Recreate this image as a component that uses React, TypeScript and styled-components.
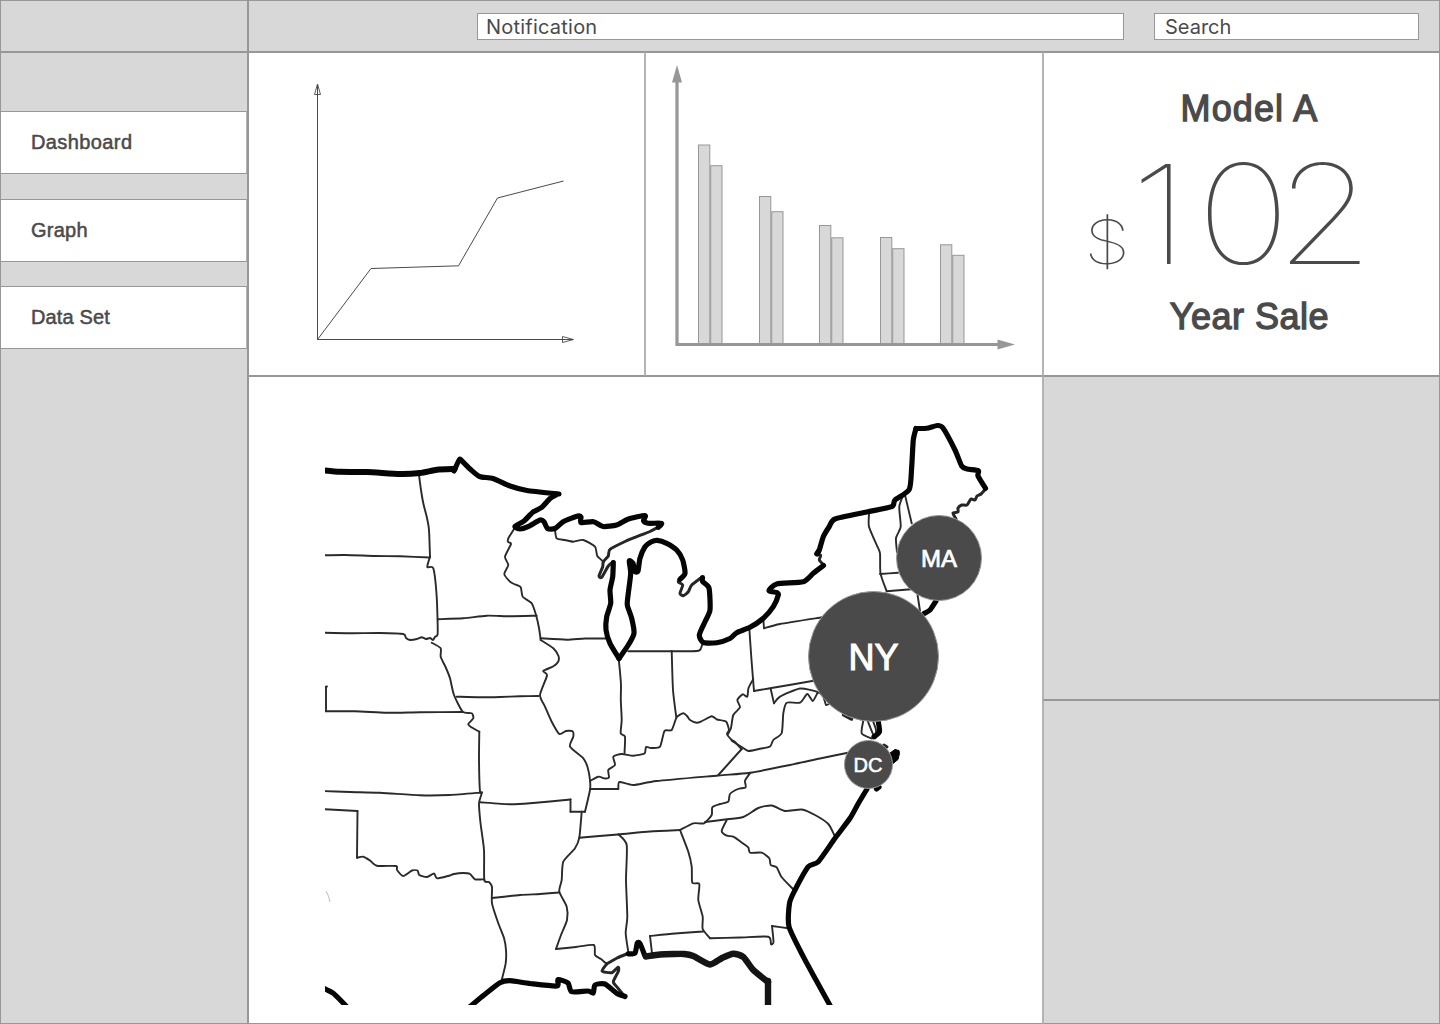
import React from "react";
import styled, { createGlobalStyle } from "styled-components";

const line = "#979797";
const softLine = "#b4b4b4";
const panelGrey = "#d8d8d8";
const ink = "#4a4a4a";
const helvetica = '"Liberation Sans", Arial, sans-serif';

const GlobalStyle = createGlobalStyle`
  *, *::before, *::after { box-sizing: border-box; }
  body { margin: 0; background: #fff; color: ${ink}; font-family: ${helvetica}; }
`;

const Page = styled.div`
  display: grid;
  grid-template-columns: 248px 1fr;
  grid-template-rows: 52px 972px;
  width: 1440px;
  height: 1024px;
  overflow: hidden;
`;

const Brand = styled.div`
  background: ${panelGrey};
  border: 1px solid ${line};
`;

const Header = styled.header`
  display: flex;
  justify-content: flex-end;
  gap: 30px;
  padding: 12px 20px 0 0;
  background: ${panelGrey};
  border: 1px solid ${line};
`;

const Field = styled.div<{ $width: number; $inset: number; $tracking: number }>`
  width: ${(p) => p.$width}px;
  height: 27px;
  padding-left: ${(p) => p.$inset}px;
  background: #fff;
  border: 1px solid ${line};
  font: 400 20px/26px Inter, sans-serif;
  letter-spacing: ${(p) => p.$tracking}px;
`;

const Sidebar = styled.nav`
  display: flex;
  flex-direction: column;
  padding-top: 58px;
  background: ${panelGrey};
  border: 1px solid ${line};
`;

const NavItem = styled.a<{ $gap: number; $tracking: number }>`
  height: 63px;
  margin-bottom: ${(p) => p.$gap}px;
  padding-left: 30px;
  background: #fff;
  border: solid ${line};
  border-width: 1px 1px 1px 0;
  border-right-color: ${softLine};
  font-size: 20px;
  line-height: 61px;
  letter-spacing: ${(p) => p.$tracking}px;
  -webkit-text-stroke: 0.5px ${ink};
`;

const Board = styled.main`
  display: grid;
  grid-template-columns: 397px 398px 397px;
  grid-template-rows: 324px 324px 324px;
`;

const Panel = styled.section<{ $grey?: boolean }>`
  background: ${(p) => (p.$grey ? panelGrey : "#fff")};
  border: 1px solid ${line};
  border-left-color: ${softLine};
  border-right-color: ${softLine};
  overflow: hidden;
  &:first-child { border-left-color: ${line}; }
  &:nth-child(3), &:nth-child(n + 5) { border-right-color: ${line}; }
  svg { display: block; }
`;

const MapPanel = styled(Panel)`
  grid-column: 1 / 3;
  grid-row: 2 / 4;
  border-left-color: ${line};
  padding: 35px 0 0 76px;
`;

const MapArea = styled.div`
  position: relative;
  width: 680px;
  height: 593px;
`;

const Pin = styled.div<{ $x: number; $y: number; $r: number; $size: number }>`
  position: absolute;
  left: ${(p) => p.$x - p.$r - 325}px;
  top: ${(p) => p.$y - p.$r - 412}px;
  width: ${(p) => p.$r * 2}px;
  height: ${(p) => p.$r * 2}px;
  display: flex;
  align-items: center;
  justify-content: center;
  border: 1px solid ${line};
  border-radius: 50%;
  background: ${ink};
  color: #fff;
  font-size: ${(p) => p.$size}px;
  line-height: 1;
  padding-top: ${(p) => p.$size * 0.09}px;
  -webkit-text-stroke: ${(p) => p.$size * 0.03}px #fff;
`;

const Metric = styled(Panel)`
  display: flex;
  flex-direction: column;
  align-items: center;
  padding: 36px 0 0 16px;
`;

const MetricLabel = styled.h2<{ $tracking: number }>`
  margin: 0;
  font-size: 36px;
  font-weight: 400;
  line-height: 40px;
  letter-spacing: ${(p) => p.$tracking}px;
  -webkit-text-stroke: 1.3px ${ink};
`;

const Amount = styled.div`
  display: flex;
  align-items: baseline;
  height: 168px;
  margin-left: -47px;
  font-family: Inter, sans-serif;
  font-weight: 100;
  line-height: 170px;
`;

const Currency = styled.span`
  font-size: 61px;
  transform: scaleX(1.24);
  transform-origin: right;
`;

const Digits = styled.span`
  font-size: 138px;
  margin-left: 30px;
  letter-spacing: -13px;
  transform: scaleX(1.15);
  transform-origin: right;
`;

const LeadDigit = styled.span`
  letter-spacing: 7px;
`;

const barGroups = [
  { x: 698.5, tops: [145, 165.7] },
  { x: 759.5, tops: [196.5, 211.7] },
  { x: 819.5, tops: [225.5, 237.8] },
  { x: 880.5, tops: [237.5, 248.7] },
  { x: 940.5, tops: [244.8, 255.3] },
];

const northBorder = [
  "320,470 340,471.8 367,472 400,474 420,473 437,469.8 454.5,469",
];

const coast = [
  "454,471 459.5,459.5 463,462 470,469 479.5,476.5 493,478.5 510,486 527,490.5 559,494",
  "556,495 550,498.5 541.5,507.5 533,512 524,521 515,526.5 520,529 528,526.7 540,520 544,521.7 547.5,528.5 555,528.5 563.5,521.5 578,516 581,517 581,522.5 593.5,521.7 603,526.5 616.7,525 628.5,519 645,515.5 643.5,520.7 648.3,523.3 661.5,523.3 658.3,527.3",
  "613.3,562.7 612.7,576.7 610,590 610.7,603.3 606.7,616.7 606,630 610,643.3 619,658.5",
  "619,658.5 628.3,645 634,633.3 631.7,618.3 627.3,605 628.3,593.3 630.7,573.3 629.3,561 633,563.3 635,571.5 638,571 640,558.3 645,546.7 651,542 657.3,540.3 666.7,543.3 676.7,550 682.7,560 685,573.3 680,579.3",
  "702.5,577.5 702.7,581.7 709,588 710,610 705,621.7 699.3,635 703.3,642.5 716.7,642.7 730,638.5 736.7,632.7 750,627.3 763.3,618.3 773.3,606.7 778.3,595 777,592.5 769,590.7 776.7,584 803.3,581.7 813.3,573.3 823.5,565.5",
  "817,554 819.3,550 823.3,536.7 829,527 835,519 866.7,512 891.7,506.7 895,500 909.3,489.3 911.7,466.7 913.3,440 916,428.5",
  "916,428.5 926.7,428.3 937.3,425.5 943,428 955,450 961.7,466 967,469 978.3,470.7 978,476 985.5,488.3",
  "867,789 858,804 850,818.3 835,838.3 818.3,861.7 808.3,866.7 795,890 789.5,903.3 789,926.7 803.3,956.7 816,980 832,1009",
  "320,986.5 333.3,993.3 347,1007",
  "466,1010 484,995 500,982.7 510,980.7 530,983.5 556.7,986 558,979.5 568,983 571.7,991.7 588,991 593.3,993 595,985 605,984 616.7,993.3 625,996.5",
  "628.3,953.8 635,953 637.3,943 640,943.5 645,956",
  "936,601 930,610 924,613.5",
  "878,720 879.5,731.7 874,736.7",
  "876.5,789 879,787",
];

const gulf = [
  "646,956.5 660,954.5 673.3,954 684,954 693.3,956 710,964.5 722,958 733.3,953.7 743.3,957 753.3,970 768,982",
  "768,981 768,1012",
];

const shores = [
  "658,527.3 650,531.5 636.7,536.7 626.7,540.7 610,549.3 608.3,556 603.3,561.7 602.7,566.7 599,576 601.7,577.3 608.3,566 613.3,561.7",
  "679,580 678.3,582 682.7,585 680,593.3 683.3,595.7 688.3,591.7 691.7,585 701.7,577.3",
  "824,565.3 819.3,560 820.7,555.3 815.5,554 818,550",
  "986,488.3 981,494 977,496 975,500 971,499 967,505 961.7,505 958,508 958,512 953,513 956,519",
  "606.7,964 617,958 628.3,953.3",
  "606.7,964 602,971 611.7,972.7 618,967.3 618.5,971 613.3,981.7 616.7,986.7 625,996.7",
  "843.3,715 851.7,719.3",
  "884,745 887,747",
];

const borders = [
  "419,475 421,490 423.3,503.3 427,518 429,530 430,556.7",
  "430,556.7 427.3,567 433.3,568.3 436.7,596.7 437.7,633.3 435,636.7 433,640 430,638 426,639 421.7,637.3 417,639 410,640 406,638 403.3,634 380,633 350,633.3 320,632.7",
  "320,555.3 345,555 375,556 400,556.3 430,557.5",
  "437.7,619.3 463.3,618.3 486.7,615.7 510,616.3 536.7,615.7",
  "514,529 508.5,538 508,542 511,544 505,556.7 508.3,565 504.3,574 510,581.7 514,584 520.7,587.3 522.7,596.7 531.7,603.3 536,615 539,628 540.7,640",
  "540.7,640 553.3,648.3 558.5,656 558,662 553,666.5 543.3,671 547,675.5 540,695 545,706.7 551.7,721.7 559.3,734 566,731 572.5,731.3 573.3,736.7 570,746.7 583.3,758.3 587.5,767 590,780 590,790 585,811.7",
  "585,811.7 570.5,811.7",
  "570.5,811.7 570.5,799.5",
  "570.5,799.5 530,803.3 510,804.3 480,802.3",
  "581.7,811.7 579.3,837.7 575,848.3 563.3,861.7 561.7,880 559.3,891.7 566.7,906.7 567,920 561,935 556,949",
  "556,949 576,947 593.8,945 595,955 601,959 606.7,964",
  "579.3,837.7 618,834.5 650,831.5 680,830",
  "618.3,834.3 626.7,845 626,880 627.3,916.7 625.7,933.3 628.3,952",
  "540.7,638.3 566.7,639.7 585,638.5 606,638.5",
  "618.8,660 620,672 621,685 620.8,700 621.7,720 620.7,733.3 625,736.7 624.5,753",
  "590,781 598.3,776.7 605,778.5 609,777.3 608.3,770 615,765 613.3,756.7 621.7,754 633.3,755.7 644.5,753.5 646,747 651,748 660,746.7 664.5,731 671.7,730 676.7,717.3 683.3,713.3 687,716 690,720 696.7,722.7 702,721 711.7,716.3 717,719.5 726,721.5 729,730 727,734 731.7,740 735,742 741.7,749.3",
  "741.7,749 718.3,775",
  "671.7,651 673,690 676.3,717.3",
  "628.3,651.3 660,651.3 697,651 701,648 702.7,643",
  "456.7,696.7 480,697.3 500,697 520,696.3 538.3,696",
  "431.7,642.7 440.7,648.3 440.7,656.7 446,668 450,678.3 454,695 462.7,711.7 471.7,713.3 473.3,718.3 468.3,724 471,727 479.3,731.7",
  "479.3,731.7 479,760 480,791.7 482,792.5 479,803.3 480.5,823 484,850 484.3,880 489,882 492,887 492,903.3 498.3,923.3 504,938 506,950 505.7,963.3 501.7,980",
  "320,711.3 355,711.3 386.7,712.8 420,712.3 462.7,712",
  "325,687 327,686.5",
  "326,687 326,711",
  "320,791 350,792 380,792.7 420,795.3 450,795 481.7,792.5",
  "320,809 357.5,811",
  "357.5,811 357,857.7",
  "357,857.7 363.3,856.7 370,860.5 376.7,865.7 396,866 397,870 403.3,876 412,870.5 417.5,870.5 419.3,875 427,877 434,873.5 437,878.3 448,876 454,874 463,873 470,874 475,879.3 484.3,879.3",
  "492.7,898 520,895 540,894 559.3,892.5",
  "555,530 556.7,538.3 565,540 573.3,541.7 583.3,540 595,546.7 597.3,556 604,562",
  "869,514 869,526.7 876.7,545 880,553.3 880.5,573.3 886.7,591.3",
  "886.7,591.3 911,589.3",
  "880,574 898,572.7",
  "904,493.3 899.3,506.7 900.7,526.7 896,538 897,552",
  "905,495 911.7,523.3",
  "917.3,593 920,611",
  "763.3,619 764,628.3",
  "764,628.3 780,624 822,617.3",
  "749.3,628.3 751.5,660 754,691",
  "754,691 770,688.3 815,680.5",
  "770.7,689 774,703.3",
  "774,703.3 780,696.7 800,688.5 816.7,691.7 823.3,696.7 826,705 830,703",
  "753.3,679 748.5,688 747.3,696.7 742.7,694.3 737.3,700 740,707.3 733.3,715 731,728 728,734",
  "731.7,740.7 741.7,747 748.3,751 759,749 770,746.5 773.3,740 781.7,733 783.3,713.3 786.7,702.7 800,702.7 807.3,694 812.7,701 817.3,693.3",
  "590,789 618.3,789",
  "618.3,789 619.5,782 633.3,785 656.7,781 718.3,775.5 750,772.7 790,765 820,758.5 848,752.7",
  "750,773.3 745,780.7 745.7,787.3 738,789 730,794 728.3,801.7 720,804 712.3,807.3 711.7,815 704,823.3 693.3,823.3 680,830",
  "680,830 688.3,851.7 691.7,866.7 692.3,882.7 699.3,884 698.3,900 702.7,916.7 702.7,929 710,938.3",
  "710,938.3 740,937.5 768.3,936.7 771,944.3 773.5,941.7 772,926",
  "772,926 788.3,928.3",
  "705,822 725,819.5 743.3,817 758.3,808 771.7,805.5 785,811 801.7,809.5 815,815 828.3,824 834.3,835",
  "726.7,820 721.7,831 726.7,835.7 733.3,836.7 741,842 748.3,847.3 750,852.7 761.7,852.7 769.3,858.3 770.7,865 776.7,867.3 781.7,877.3 793.3,889.3",
  "703.3,931.5 675,933.5 650,936",
  "650,936 652,953.3",
  "863.3,720.7 861.7,733.3 871.7,738.5",
  "868,721.7 875,738.3 876,730 873,721",
];

/* Turns a list of "x,y" points into a softly rounded pen stroke. */
const penStroke = (points: string) => {
  const p = points.split(" ").map((pair) => pair.split(",").map(Number));
  const k = 0.11;
  let d = `M${p[0][0]} ${p[0][1]}`;
  for (let i = 0; i < p.length - 1; i++) {
    const before = p[Math.max(i - 1, 0)];
    const from = p[i];
    const to = p[i + 1];
    const after = p[Math.min(i + 2, p.length - 1)];
    d += `C${from[0] + (to[0] - before[0]) * k} ${from[1] + (to[1] - before[1]) * k} `;
    d += `${to[0] - (after[0] - from[0]) * k} ${to[1] - (after[1] - from[1]) * k} ${to[0]} ${to[1]}`;
  }
  return d;
};

const Strokes = ({ lines, width, color }: { lines: string[]; width: number; color: string }) => (
  <g fill="none" stroke={color} strokeWidth={width} strokeLinejoin="round" strokeLinecap="round">
    {lines.map((points) => (
      <path key={points} d={penStroke(points)} />
    ))}
  </g>
);

const StatesMap = () => (
  <svg width="680" height="593" viewBox="325 412 680 593">
    <Strokes lines={borders} width={1.9} color="#2a2a2a" />
    <Strokes lines={shores} width={3} color="#262626" />
    <Strokes lines={coast} width={5.2} color="#050505" />
    <Strokes lines={northBorder} width={6} color="#050505" />
    <Strokes lines={gulf} width={6.4} color="#141414" />
    <path d="M890 753l5-3.5 4 1 .5 3-1.5 6-5 4z" fill="#050505" stroke="#050505" />
    <path d="M326 891q3 5 4 11" fill="none" stroke="#bbb" strokeWidth="1" />
  </svg>
);

const LineChart = () => (
  <svg width="395" height="322" viewBox="249 53 395 322" fill="none" stroke={ink}>
    <path d="M317.5 84V339.5H573" />
    <path d="M317.5 84l-3 10.5h6zM573.5 339.5l-11-3v6z" strokeWidth=".9" />
    <path d="M317.5 339.5L371 268.5 458.5 265.8 497.5 198 563.5 181" />
  </svg>
);

const BarChart = () => (
  <svg width="396" height="322" viewBox="646 53 396 322">
    <g fill={panelGrey} stroke={line}>
      {barGroups.map(({ x, tops }) =>
        tops.map((top, i) => (
          <rect key={top} x={x + i * 12.2} y={top} width="11.3" height={344 - top} />
        ))
      )}
    </g>
    <path d="M677 80V344.5H999" fill="none" stroke={line} strokeWidth="3.2" />
    <path d="M677 65l5 17.5h-10zM1015 344.5l-17.5-5v10z" fill={line} />
  </svg>
);

export default function App() {
  return (
    <Page>
      <GlobalStyle />
      <Brand />
      <Header>
        <Field $width={647} $inset={8} $tracking={0.22}>Notification</Field>
        <Field $width={265} $inset={10} $tracking={0}>Search</Field>
      </Header>
      <Sidebar>
        <NavItem $gap={25} $tracking={0.4}>Dashboard</NavItem>
        <NavItem $gap={24} $tracking={0.25}>Graph</NavItem>
        <NavItem $gap={0} $tracking={0.15}>Data Set</NavItem>
      </Sidebar>
      <Board>
        <Panel><LineChart /></Panel>
        <Panel><BarChart /></Panel>
        <Metric>
          <MetricLabel $tracking={1.1}>Model A</MetricLabel>
          <Amount>
            <Currency>$</Currency>
            <Digits><LeadDigit>1</LeadDigit>02</Digits>
          </Amount>
          <MetricLabel $tracking={0.5}>Year Sale</MetricLabel>
        </Metric>
        <MapPanel>
          <MapArea>
            <StatesMap />
            <Pin $x={939} $y={558.3} $r={43} $size={24}>MA</Pin>
            <Pin $x={873.5} $y={656} $r={65.5} $size={36}>NY</Pin>
            <Pin $x={868} $y={764} $r={24.5} $size={20}>DC</Pin>
          </MapArea>
        </MapPanel>
        <Panel $grey />
        <Panel $grey />
      </Board>
    </Page>
  );
}
